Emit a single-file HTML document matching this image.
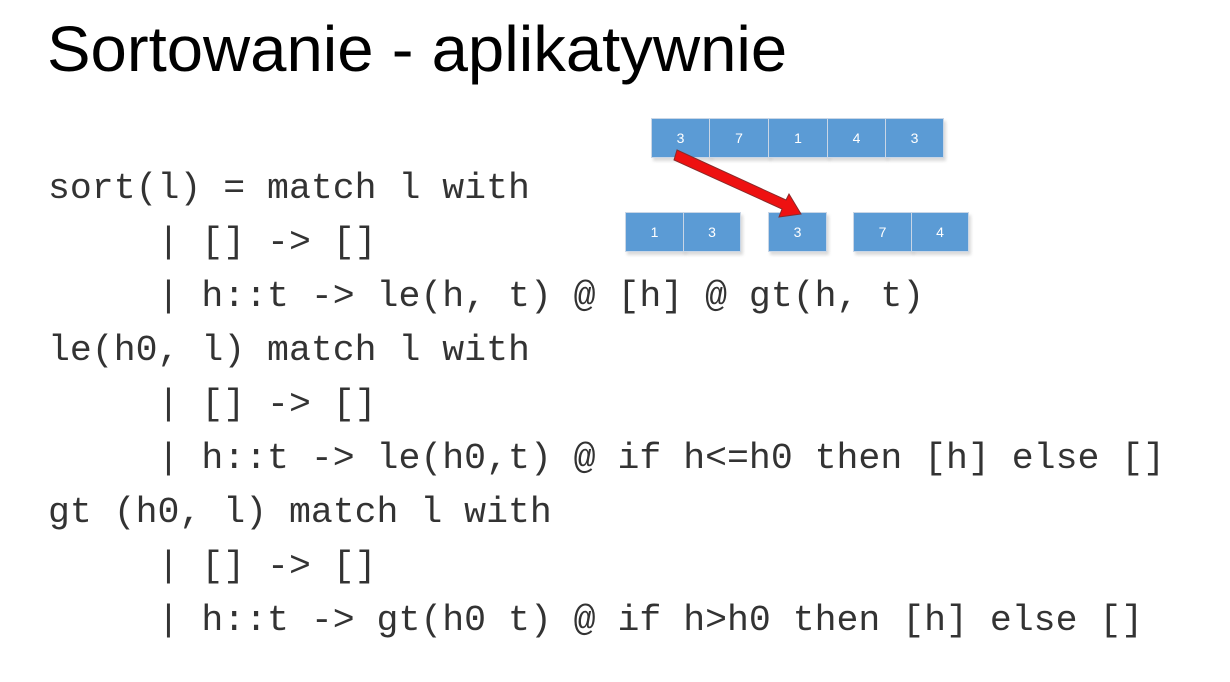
<!DOCTYPE html>
<html><head><meta charset="utf-8"><style>
html,body{margin:0;padding:0;background:#fff;}
body{width:1230px;height:682px;position:relative;overflow:hidden;}
.title{position:absolute;left:47px;top:12px;font-family:"Liberation Sans",sans-serif;font-size:64px;color:#000;white-space:nowrap;transform-origin:0 0;transform:scaleX(1.02);}
.code{position:absolute;left:48px;font-family:"Liberation Mono",monospace;font-size:36.5px;color:#333;white-space:pre;line-height:54px;}
.box{position:absolute;height:40px;background:#5b9bd5;color:#fff;font-family:"Liberation Sans",sans-serif;font-size:14px;display:flex;align-items:center;justify-content:center;box-sizing:border-box;border:1px solid #c9d6e6;box-shadow:2px 3px 3px rgba(0,0,0,0.15);}
</style></head><body>
<div class="title">Sortowanie - aplikatywnie</div>
<div class="code" style="top:162px">sort(l) = match l with
     | [] -&gt; []
     | h::t -&gt; le(h, t) @ [h] @ gt(h, t)
le(h0, l) match l with
     | [] -&gt; []
     | h::t -&gt; le(h0,t) @ if h&lt;=h0 then [h] else []
gt (h0, l) match l with
     | [] -&gt; []
     | h::t -&gt; gt(h0 t) @ if h&gt;h0 then [h] else []</div>

<div class="box" style="left:651px;top:118px;width:59px">3</div>
<div class="box" style="left:709px;top:118px;width:60px">7</div>
<div class="box" style="left:768px;top:118px;width:60px">1</div>
<div class="box" style="left:827px;top:118px;width:59px">4</div>
<div class="box" style="left:885px;top:118px;width:59px">3</div>

<div class="box" style="left:625px;top:212px;width:59px">1</div>
<div class="box" style="left:683px;top:212px;width:58px">3</div>
<div class="box" style="left:768px;top:212px;width:59px">3</div>
<div class="box" style="left:853px;top:212px;width:59px">7</div>
<div class="box" style="left:911px;top:212px;width:58px">4</div>

<svg style="position:absolute;left:0;top:0" width="1230" height="682">
<polygon points="677,150 674,160 782,209 779,217 801,214 789,194 786,200" fill="#ee1111" stroke="#8a2a2a" stroke-width="1"/>
</svg>
</body></html>
